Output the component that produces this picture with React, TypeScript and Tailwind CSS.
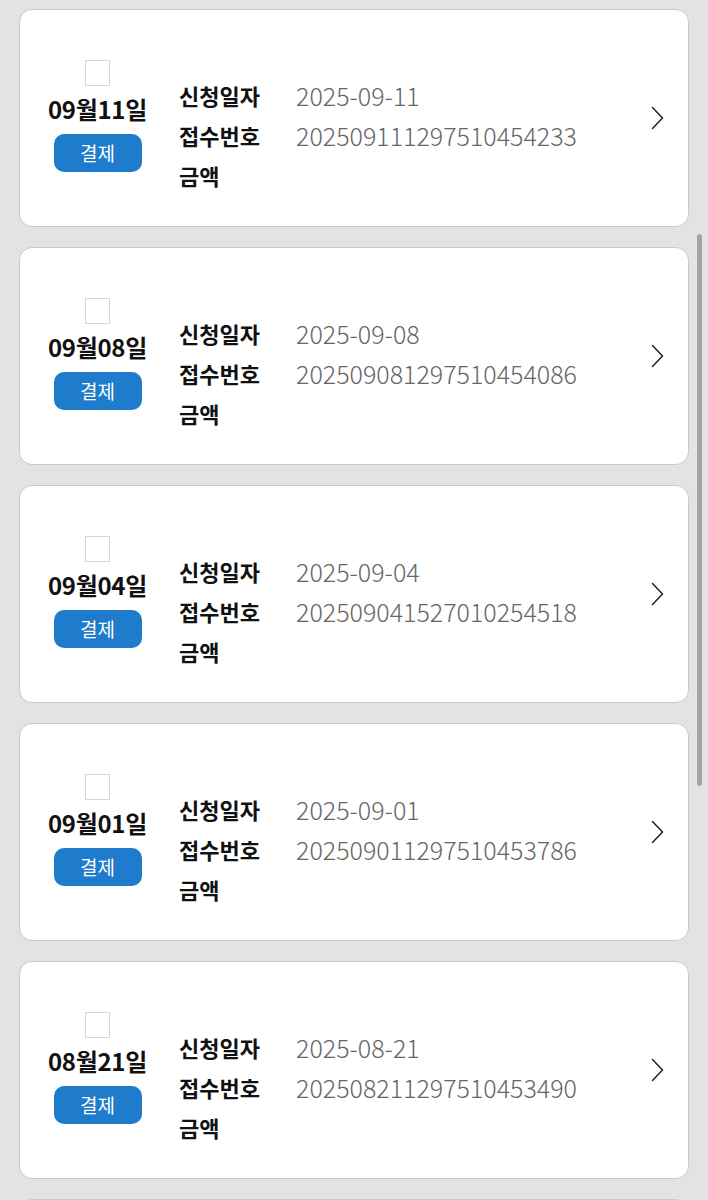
type Payment = {
    day: string;
    requestDate: string;
    receiptNo: string;
};

const payments: Payment[] = [
    { day: '09월11일', requestDate: '2025-09-11', receiptNo: '202509111297510454233' },
    { day: '09월08일', requestDate: '2025-09-08', receiptNo: '202509081297510454086' },
    { day: '09월04일', requestDate: '2025-09-04', receiptNo: '202509041527010254518' },
    { day: '09월01일', requestDate: '2025-09-01', receiptNo: '202509011297510453786' },
    { day: '08월21일', requestDate: '2025-08-21', receiptNo: '202508211297510453490' },
];

function Chevron() {
    return (
        <svg width="13" height="24" viewBox="0 0 13 24" fill="none">
            <polyline
                points="1.5,1.5 11.5,12 1.5,22.5"
                stroke="#222"
                strokeWidth="1.5"
                strokeLinecap="round"
                strokeLinejoin="round"
            />
        </svg>
    );
}

function PaymentCard({ item }: { item: Payment }) {
    return (
        <div className="flex h-[218px] shrink-0 items-start rounded-[13px] border border-[#c9c9c9] bg-white">
            {/* date + pay */}
            <div className="ml-[22px] flex w-[111px] flex-col items-center pt-[50px]">
                <div className="h-[26px] w-[25px] border border-[#d6d6d6] bg-white" />
                <div className="mt-[8px] text-[24px] leading-[30px] font-bold tracking-[-0.3px] text-[#111]">
                    {item.day}
                </div>
                <button className="mt-[10px] flex h-[38px] w-[88px] items-center justify-center rounded-[10px] bg-[#1f7bcb] text-[19px] text-white">
                    결제
                </button>
            </div>

            {/* details */}
            <div className="ml-[26px] flex pt-[65px]">
                <div className="w-[117px] text-[22px] leading-[40px] font-bold text-[#111]">
                    <div>신청일자</div>
                    <div>접수번호</div>
                    <div>금액</div>
                </div>
                <div className="text-[25px] leading-[40px] font-light text-[#666]">
                    <div>{item.requestDate}</div>
                    <div>{item.receiptNo}</div>
                    <div>&nbsp;</div>
                </div>
            </div>

            <div className="mr-[24px] ml-auto self-center">
                <Chevron />
            </div>
        </div>
    );
}

export default function App() {
    return (
        <div
            className="relative h-[1200px] overflow-hidden bg-[#e3e3e3]"
            style={{ fontFamily: '"Noto Sans CJK KR", "Noto Sans", sans-serif' }}
        >
            <div className="flex flex-col gap-[20px] px-[19px] pt-[9px]">
                {payments.map((p) => (
                    <PaymentCard key={p.day} item={p} />
                ))}
                {/* next card, only its top edge is visible */}
                <div className="h-[218px] shrink-0 rounded-[13px] border border-[#c9c9c9] bg-white" />
            </div>

            {/* scroll indicator */}
            <div className="absolute top-[234px] right-[6px] h-[552px] w-[5px] rounded-full bg-[#a3a3a3]" />
        </div>
    );
}
